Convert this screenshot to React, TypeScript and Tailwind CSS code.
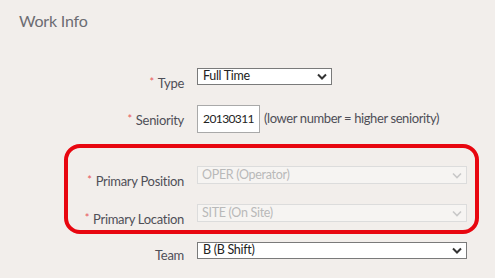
import React from 'react';

const font = { fontFamily: 'Lato, "Liberation Sans", sans-serif' };

function Chevron({ disabled }: { disabled?: boolean }) {
  return (
    <svg width="10" height="7" viewBox="0 0 10 7" className="shrink-0">
      <path
        d="M1 1.5 L5 5.5 L9 1.5"
        fill="none"
        stroke={disabled ? '#c8c8c8' : '#333'}
        strokeWidth={disabled ? 1.6 : 2}
      />
    </svg>
  );
}

function Select({ value, width, disabled }: { value: string; width: string; disabled?: boolean }) {
  return (
    <div
      className={
        disabled
          ? `${width} h-[18px] border border-[#dcdcdc] bg-[#f6f4f2] flex items-center justify-between pl-[4px] pr-[4px] text-[12.5px] tracking-[-0.3px] leading-none text-[#b9b9b9]`
          : `${width} h-[17px] border border-[#7a7a7a] bg-white flex items-center justify-between pl-[5px] pr-[4px] text-[12.5px] tracking-[-0.3px] leading-none text-[#222]`
      }
    >
      <span>{value}</span>
      <Chevron disabled={disabled} />
    </div>
  );
}

function Label({ text, required, width }: { text: string; required?: boolean; width: string }) {
  return (
    <div className={`${width} shrink-0 text-right pt-[5px] text-[13px] tracking-[-0.3px] leading-[17px] text-[#4f4f57]`}>
      {required && <span className="text-[#e8585a] text-[11px] mr-[4px] align-[2px]">*</span>}
      {text}
    </div>
  );
}

export default function App() {
  return (
    <div className="w-[495px] h-[278px] overflow-hidden bg-[#f2eeeb]" style={font}>
      <div className="h-[40px] pt-[11px] pl-[19px] text-[16px] tracking-[-0.2px] leading-[20px] text-[#6c6c72]">Work Info</div>

      <div className="mt-[28px] h-[17px] flex gap-[13px]">
        <Label text="Type" required width="w-[184px]" />
        <Select value="Full Time" width="w-[135px]" />
      </div>

      <div className="mt-[20px] h-[28px] flex gap-[13px]">
        <Label text="Seniority" required width="w-[184px]" />
        <div className="w-[63px] h-[28px] border border-[#a9a9a9] bg-white flex items-center justify-center text-[12px] tracking-[-0.6px] text-[#222]">
          20130311
        </div>
        <div className="-ml-[9px] pt-[5px] text-[13px] tracking-[-0.4px] leading-[17px] text-[#4f4f57]">(lower number = higher seniority)</div>
      </div>

      <div className="mt-[11px] ml-[64px] w-[415px] h-[90px] border-4 border-[#e8060f] rounded-[16px] pt-[18px]">
        <div className="h-[18px] flex gap-[13px]">
          <Label text="Primary Position" required width="w-[116px]" />
          <Select value="OPER (Operator)" width="w-[270px]" disabled />
        </div>
        <div className="mt-[20px] h-[18px] flex gap-[13px]">
          <Label text="Primary Location" required width="w-[116px]" />
          <Select value="SITE (On Site)" width="w-[270px]" disabled />
        </div>
      </div>

      <div className="mt-[8px] h-[17px] flex gap-[13px]">
        <Label text="Team" width="w-[184px]" />
        <Select value="B (B Shift)" width="w-[270px]" />
      </div>
    </div>
  );
}
